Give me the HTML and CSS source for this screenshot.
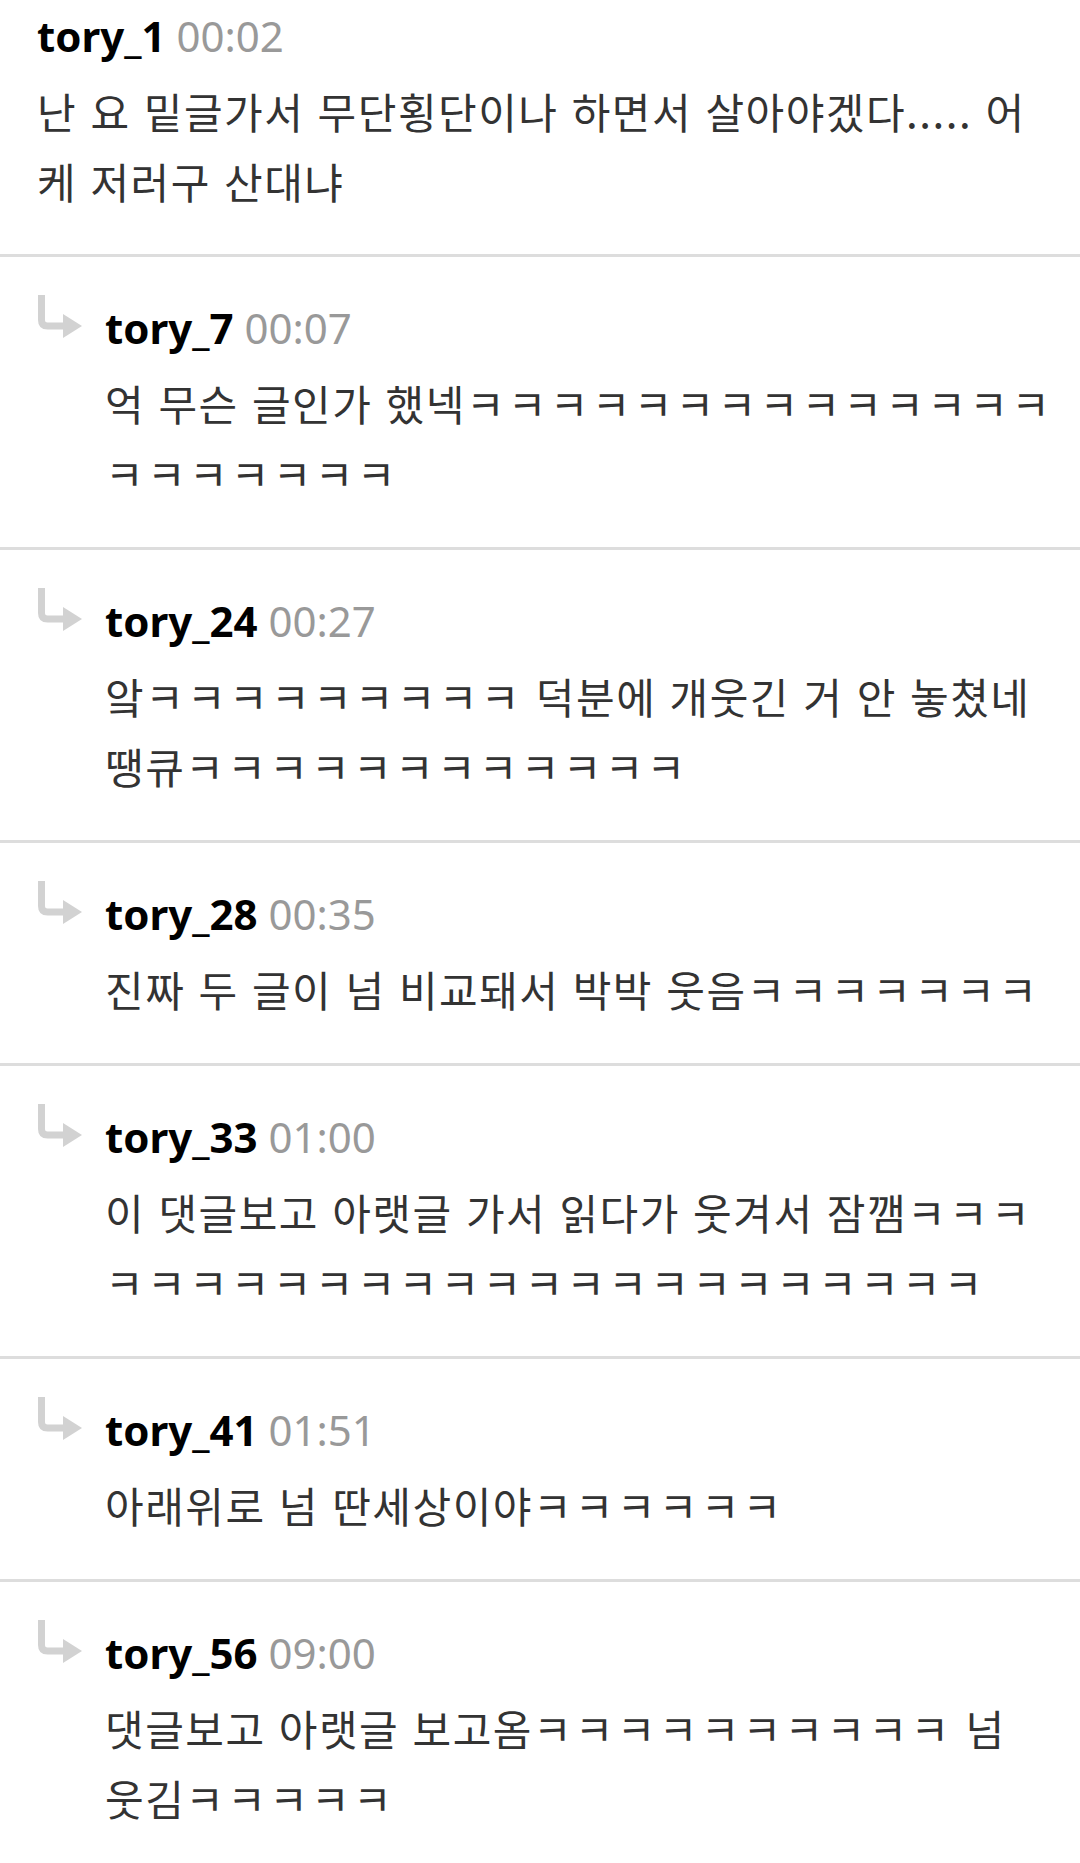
FILE: index.html
```html
<!DOCTYPE html>
<html lang="ko">

<head>
    <meta charset="UTF-8">
    <meta name="viewport" content="width=device-width, initial-scale=1.0">
    <title>댓글</title>
    <link rel="stylesheet" href="styles.css">
</head>

<body>
    <div class="comment-list">
        <div class="comment">
            <div class="meta"><span class="name">tory_1</span> <span class="time">00:02</span></div>
            <p class="text">난 요 밑글가서 무단횡단이나 하면서 살아야겠다..... 어케 저러구 산대냐</p>
        </div>

        <div class="comment reply">
            <svg class="reply-icon" viewBox="0 0 46 44"><path d="M5.5 0V25Q5.5 31 11.5 31H29"/><polygon points="27,19 46,31 27,43"/></svg>
            <div class="reply-main">
                <div class="meta"><span class="name">tory_7</span> <span class="time">00:07</span></div>
                <p class="text">억 무슨 글인가 했넥<span class="lol">ㅋㅋㅋㅋㅋㅋㅋㅋㅋㅋㅋㅋㅋㅋㅋㅋㅋㅋㅋㅋㅋ</span></p>
            </div>
        </div>

        <div class="comment reply">
            <svg class="reply-icon" viewBox="0 0 46 44"><path d="M5.5 0V25Q5.5 31 11.5 31H29"/><polygon points="27,19 46,31 27,43"/></svg>
            <div class="reply-main">
                <div class="meta"><span class="name">tory_24</span> <span class="time">00:27</span></div>
                <p class="text">앜<span class="lol">ㅋㅋㅋㅋㅋㅋㅋㅋㅋ</span> 덕분에 개웃긴 거 안 놓쳤네 땡큐<span class="lol">ㅋㅋㅋㅋㅋㅋㅋㅋㅋㅋㅋㅋ</span></p>
            </div>
        </div>

        <div class="comment reply">
            <svg class="reply-icon" viewBox="0 0 46 44"><path d="M5.5 0V25Q5.5 31 11.5 31H29"/><polygon points="27,19 46,31 27,43"/></svg>
            <div class="reply-main">
                <div class="meta"><span class="name">tory_28</span> <span class="time">00:35</span></div>
                <p class="text">진짜 두 글이 넘 비교돼서 박박 웃음<span class="lol">ㅋㅋㅋㅋㅋㅋㅋ</span></p>
            </div>
        </div>

        <div class="comment reply">
            <svg class="reply-icon" viewBox="0 0 46 44"><path d="M5.5 0V25Q5.5 31 11.5 31H29"/><polygon points="27,19 46,31 27,43"/></svg>
            <div class="reply-main">
                <div class="meta"><span class="name">tory_33</span> <span class="time">01:00</span></div>
                <p class="text">이 댓글보고 아랫글 가서 읽다가 웃겨서 잠깸<span class="lol">ㅋㅋㅋㅋㅋㅋㅋㅋㅋㅋㅋㅋㅋㅋㅋㅋㅋㅋㅋㅋㅋㅋㅋㅋ</span></p>
            </div>
        </div>

        <div class="comment reply">
            <svg class="reply-icon" viewBox="0 0 46 44"><path d="M5.5 0V25Q5.5 31 11.5 31H29"/><polygon points="27,19 46,31 27,43"/></svg>
            <div class="reply-main">
                <div class="meta"><span class="name">tory_41</span> <span class="time">01:51</span></div>
                <p class="text">아래위로 넘 딴세상이야<span class="lol">ㅋㅋㅋㅋㅋㅋ</span></p>
            </div>
        </div>

        <div class="comment reply">
            <svg class="reply-icon" viewBox="0 0 46 44"><path d="M5.5 0V25Q5.5 31 11.5 31H29"/><polygon points="27,19 46,31 27,43"/></svg>
            <div class="reply-main">
                <div class="meta"><span class="name">tory_56</span> <span class="time">09:00</span></div>
                <p class="text">댓글보고 아랫글 보고옴<span class="lol">ㅋㅋㅋㅋㅋㅋㅋㅋㅋㅋ</span> 넘 웃김<span class="lol">ㅋㅋㅋㅋㅋ</span></p>
            </div>
        </div>
    </div>
</body>

</html>
```

FILE: styles.css
```css
body {
    margin: 0;
    background-color: #fff;
    font-family: "Noto Sans", "Noto Sans CJK KR", sans-serif;
}

.comment {
    padding: 10px 24px 38px 37px;
    border-bottom: 3px solid #ddd;
}

.meta {
    font-size: 42px;
    line-height: 52px;
    white-space: nowrap;
}

.name {
    font-weight: 700;
    color: #000;
}

.time {
    color: #999;
}

.text {
    margin: 14px 0 0;
    font-family: "Noto Sans CJK KR", sans-serif;
    font-size: 42px;
    line-height: 70px;
    letter-spacing: 1.5px;
    color: #333;
}

.lol {
    letter-spacing: 3.3px;
}

.reply {
    display: flex;
    align-items: flex-start;
    padding: 38px 24px 39px 36px;
}

.reply-icon {
    flex-shrink: 0;
    width: 46px;
    height: 44px;
    margin-right: 23px;
}

.reply-icon path {
    fill: none;
    stroke: #d2d2d2;
    stroke-width: 7;
}

.reply-icon polygon {
    fill: #d2d2d2;
}

.reply-main {
    flex: 1;
    padding-top: 7px;
}
```
